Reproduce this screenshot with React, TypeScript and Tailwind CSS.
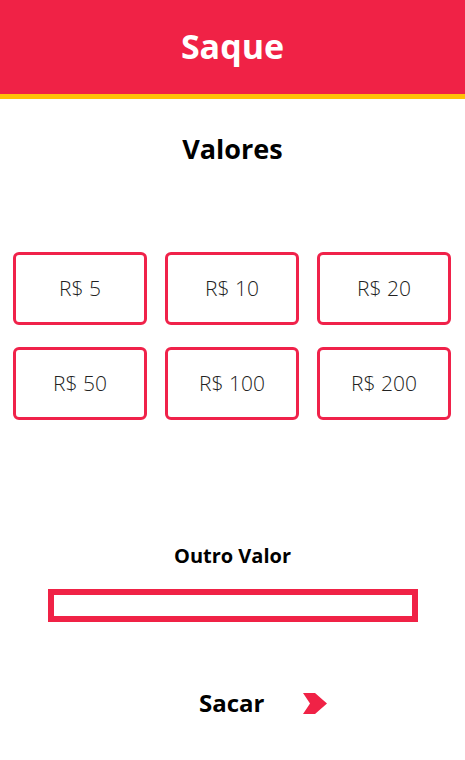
import React from "react";

const values = ["R$ 5", "R$ 10", "R$ 20", "R$ 50", "R$ 100", "R$ 200"];

export default function App() {
  return (
    <div className="w-[465px] h-[760px] bg-white" style={{ fontFamily: '"Open Sans", sans-serif' }}>
      <header className="h-[99px] bg-[#f02246] border-b-[5px] border-[#ffc107] flex items-center justify-center">
        <h1 className="text-[34px] font-bold text-white leading-none -mt-[3px]">Saque</h1>
      </header>
      <h2 className="mt-[32px] text-center text-[27px] font-bold text-black leading-[36px]">Valores</h2>
      <div className="mt-[85px] ml-[13px] grid grid-cols-[134px_134px_134px] gap-x-[18px] gap-y-[22px]">
        {values.map((v) => (
          <button
            key={v}
            className="h-[73px] border-[3px] border-[#f0224a] rounded-[6px] flex items-center justify-center text-[21px] font-light text-[#222]"
          >
            {v}
          </button>
        ))}
      </div>
      <p className="mt-[122px] text-center text-[20px] font-bold text-black leading-[28px]">Outro Valor</p>
      <div className="mt-[19px] ml-[48px] w-[370px] h-[33px] border-[6px] border-[#f02246] bg-white" />
      <div className="mt-[65px] flex items-center">
        <span className="ml-[199px] text-[24px] font-bold text-black leading-[32px]">Sacar</span>
        <svg className="ml-[39px]" width="24" height="21" viewBox="0 0 24 21">
          <polygon points="0,0 12,0 24,10.5 12,21 0,21 7,10.5" fill="#f02246" />
        </svg>
      </div>
    </div>
  );
}
